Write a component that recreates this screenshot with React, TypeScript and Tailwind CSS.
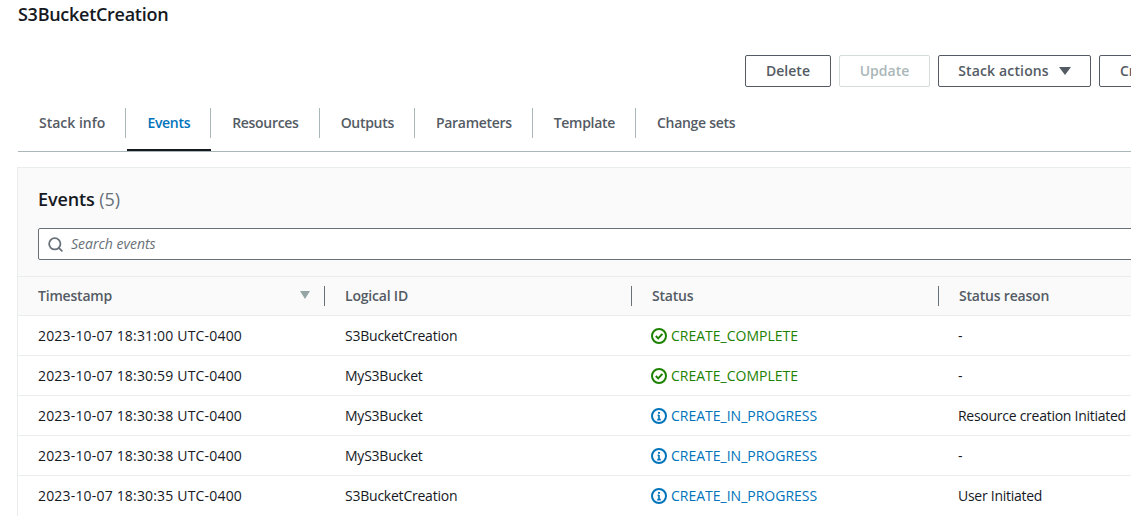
import { Search } from "lucide-react";

const rows = [
  { time: "2023-10-07 18:31:00 UTC-0400", id: "S3BucketCreation", status: "CREATE_COMPLETE", reason: "-" },
  { time: "2023-10-07 18:30:59 UTC-0400", id: "MyS3Bucket", status: "CREATE_COMPLETE", reason: "-" },
  { time: "2023-10-07 18:30:38 UTC-0400", id: "MyS3Bucket", status: "CREATE_IN_PROGRESS", reason: "Resource creation Initiated" },
  { time: "2023-10-07 18:30:38 UTC-0400", id: "MyS3Bucket", status: "CREATE_IN_PROGRESS", reason: "-" },
  { time: "2023-10-07 18:30:35 UTC-0400", id: "S3BucketCreation", status: "CREATE_IN_PROGRESS", reason: "User Initiated" },
];

const tabs = ["Stack info", "Events", "Resources", "Outputs", "Parameters", "Template", "Change sets"];

function StatusIcon({ done }: { done: boolean }) {
  if (done) {
    return (
      <svg viewBox="0 0 16 16" className="w-4 h-4 shrink-0" fill="none" stroke="currentColor" strokeWidth="2">
        <circle cx="8" cy="8" r="7" />
        <path d="M4.8 8 7.2 10.4 11.4 5.8" />
      </svg>
    );
  }
  return (
    <svg viewBox="0 0 16 16" className="w-4 h-4 shrink-0" fill="none" stroke="currentColor" strokeWidth="2">
      <circle cx="8" cy="8" r="7" />
      <path d="M8 7v5M6.2 11.6h3.6M6.6 7.4H8" strokeWidth="1.6" />
      <path d="M7 4h2v1.8H7z" fill="currentColor" stroke="none" />
    </svg>
  );
}

function HeaderCell({ label, sorted, divider }: { label: string; sorted?: boolean; divider?: boolean }) {
  return (
    <div className="relative flex items-center pl-5 pr-[15px] pb-[2px] h-full">
      <span className="font-semibold text-[#545b64] tracking-[-0.2px]">{label}</span>
      {sorted && (
        <svg viewBox="0 0 12 10" className="w-[10px] h-2 ml-auto text-[#95a5a6]" fill="currentColor" preserveAspectRatio="none">
          <path d="M0 0h12L6 10z" />
        </svg>
      )}
      {divider && <div className="absolute right-0 top-[9px] h-5 w-px bg-[#687078]" />}
    </div>
  );
}

export default function App() {
  return (
    <div className="w-[1131px] h-[516px] overflow-hidden bg-white text-[14px] text-[#16191f] font-['Open_Sans',sans-serif]">
      <div className="w-[1400px] pl-[18px]">
        <h1 className="text-[18px] leading-[28px] font-semibold tracking-[-0.28px]">S3BucketCreation</h1>

        <div className="flex gap-2 pl-[727px] mt-[27px] font-semibold">
          <button className="h-8 w-[86px] pb-[1px] border border-[#545b64] rounded-[2px] text-[#545b64]">Delete</button>
          <button className="h-8 w-[91px] pb-[1px] border border-[#d5dbdb] rounded-[2px] text-[#aab7b8]">Update</button>
          <button className="h-8 w-[153px] pb-[1px] border border-[#545b64] rounded-[2px] text-[#545b64] flex items-center justify-center gap-[10px] tracking-[0.15px]">
            Stack actions
            <svg viewBox="0 0 12 10" className="w-[12px] h-2 mt-[1px]" fill="currentColor" preserveAspectRatio="none">
              <path d="M0 0h12L6 10z" />
            </svg>
          </button>
          <button className="h-8 w-[120px] pb-[1px] border border-[#545b64] rounded-[2px] text-[#545b64] text-left pl-5">Create</button>
        </div>

        <div className="flex h-[65px] border-b border-[#aab7b8] pt-[21px]">
          {tabs.map((tab, i) => (
            <div key={tab} className="relative h-[30px] font-semibold">
              <div
                className={`px-[21px] pb-[2px] h-[30px] flex items-center ${tab === "Stack info" ? "" : "tracking-[-0.3px]"} ${tab === "Events" ? "text-[#0073bb]" : "text-[#545b64]"}`}
              >
                {tab}
              </div>
              {i < tabs.length - 1 && <div className="absolute right-0 top-0 h-[30px] w-px bg-[#aab7b8]" />}
              {tab === "Events" && <div className="absolute left-[1px] right-0 top-[41px] h-[2px] bg-[#16191f]" />}
            </div>
          ))}
        </div>

        <div className="mt-[15px] -ml-px border-l border-t border-[#eaeded]">
          <div className="bg-[#fafafa] border-b border-[#eaeded]">
            <h2 className="pt-[17px] pl-5 text-[18px] leading-[28px] font-semibold tracking-[-0.1px]">
              Events <span className="font-normal text-[#687078]">(5)</span>
            </h2>
            <div className="ml-5 mt-[15px] mb-[16px] h-8 border border-[#687078] rounded-[2px] bg-white flex items-center pl-[8px] gap-[7px] text-[#687078]">
              <Search className="w-[17px] h-[17px]" strokeWidth={2.5} />
              <span className="italic pb-[2px]">Search events</span>
            </div>
          </div>
          <div className="grid grid-cols-[307px_307px_307px_307px] h-[39px] bg-[#fafafa] border-b border-[#eaeded]">
            <HeaderCell label="Timestamp" sorted divider />
            <HeaderCell label="Logical ID" divider />
            <HeaderCell label="Status" divider />
            <HeaderCell label="Status reason" />
          </div>
          {rows.map((row, i) => {
            const done = row.status === "CREATE_COMPLETE";
            return (
              <div
                key={i}
                className={`grid grid-cols-[307px_307px_307px_307px] h-10 items-center border-b text-[#16191f] ${i < rows.length - 1 ? "border-[#eaeded]" : "border-transparent"}`}
              >
                <div className="pl-5 tracking-[0.18px]">{row.time}</div>
                <div className="pl-5 tracking-[-0.23px]">{row.id}</div>
                <div className={`pl-[19px] flex items-center gap-1 ${done ? "text-[#1d8102]" : "text-[#0073bb]"}`}>
                  <StatusIcon done={done} />
                  {row.status}
                </div>
                <div className="pl-[19px] tracking-[-0.27px]">{row.reason}</div>
              </div>
            );
          })}
        </div>
      </div>
    </div>
  );
}
